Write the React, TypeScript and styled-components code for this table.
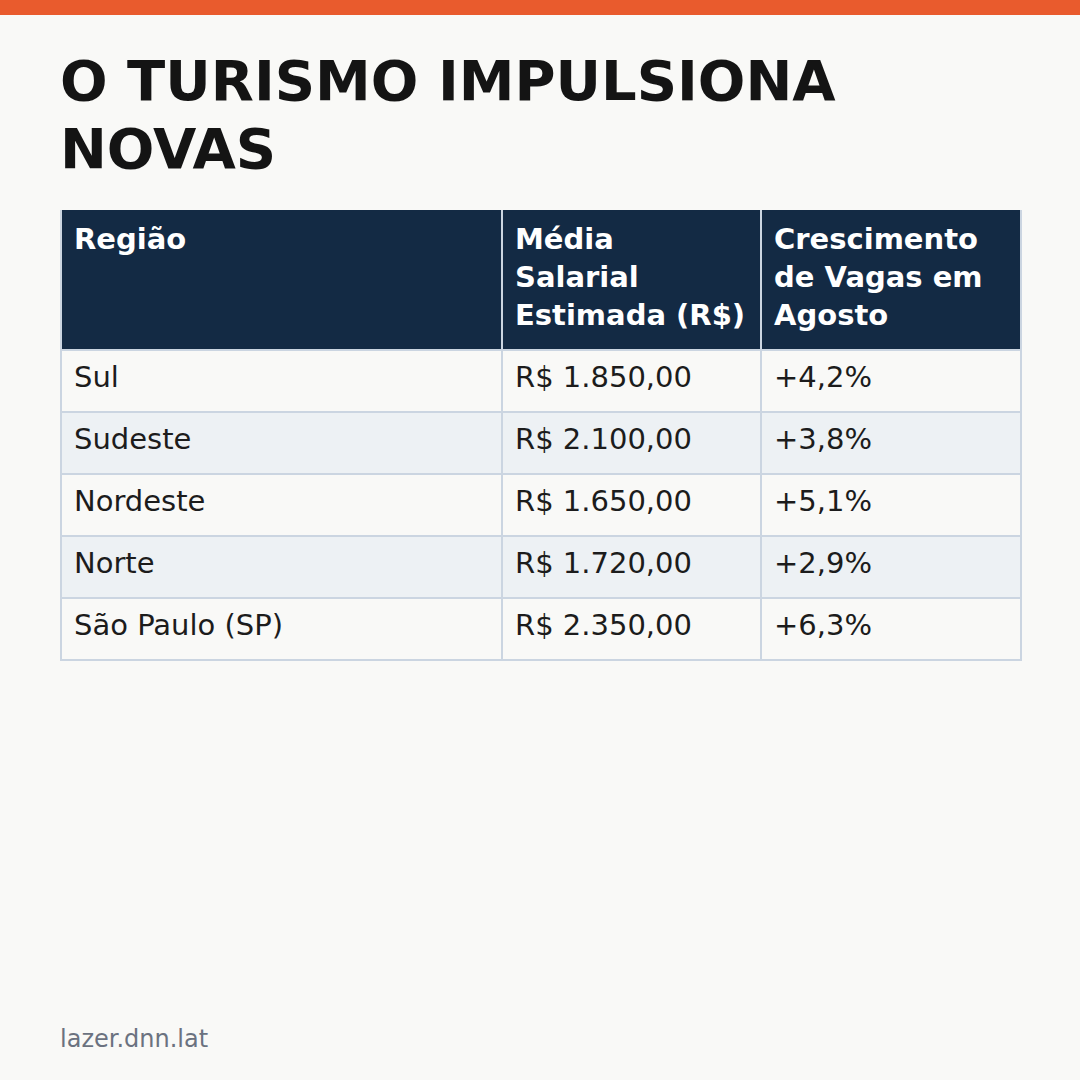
import React from "react";
import styled, { createGlobalStyle } from "styled-components";

const GlobalStyle = createGlobalStyle`
  html, body {
    margin: 0;
    padding: 0;
    background: #f9f9f7;
  }
  body {
    font-family: "DejaVu Sans", "Noto Sans", sans-serif;
  }
`;

const Page = styled.div`
  width: 1080px;
  height: 1080px;
  display: flex;
  flex-direction: column;
  background: #f9f9f7;
  box-sizing: border-box;
  overflow: hidden;
`;

const TopBar = styled.div`
  height: 15px;
  background: #e95b2d;
  flex-shrink: 0;
`;

const Content = styled.main`
  display: flex;
  flex-direction: column;
  padding: 32px 59px 0 60px;
  flex: 1;
`;

const Title = styled.h1`
  margin: 0 0 27px 0;
  font-family: "DejaVu Sans", sans-serif;
  font-weight: 700;
  font-size: 56px;
  line-height: 68px;
  color: #141414;
`;

const Table = styled.table`
  width: 960px;
  border-collapse: collapse;
  table-layout: fixed;
  font-family: "DejaVu Sans", sans-serif;
`;

const HeadCell = styled.th`
  background: #132a44;
  color: #ffffff;
  font-weight: 700;
  font-size: 29px;
  line-height: 38px;
  text-align: left;
  vertical-align: top;
  padding: 10px 12px 15px 12px;
  border: 2px solid #cbd5e1;
  border-top: none;
`;

const Row = styled.tr<{ $striped: boolean }>`
  background: ${(p) => (p.$striped ? "#edf1f4" : "#f9f9f7")};
`;

const Cell = styled.td`
  font-size: 29px;
  line-height: 38px;
  color: #1c1c1c;
  padding: 7px 12px 15px 12px;
  border: 2px solid #cbd5e1;
  vertical-align: top;
  white-space: nowrap;
`;

const Footer = styled.footer`
  margin-top: auto;
  padding: 0 60px 27px 60px;
  font-size: 24px;
  line-height: 28px;
  color: #6b7280;
  font-family: "DejaVu Sans", sans-serif;
`;

const rows = [
  ["Sul", "R$ 1.850,00", "+4,2%"],
  ["Sudeste", "R$ 2.100,00", "+3,8%"],
  ["Nordeste", "R$ 1.650,00", "+5,1%"],
  ["Norte", "R$ 1.720,00", "+2,9%"],
  ["São Paulo (SP)", "R$ 2.350,00", "+6,3%"],
];

export default function App() {
  return (
    <>
      <GlobalStyle />
      <Page>
        <TopBar />
        <Content>
          <Title>O TURISMO IMPULSIONA NOVAS</Title>
          <Table>
            <colgroup>
              <col style={{ width: 441 }} />
              <col style={{ width: 259 }} />
              <col style={{ width: 260 }} />
            </colgroup>
            <thead>
              <tr>
                <HeadCell>Região</HeadCell>
                <HeadCell>
                  Média
                  <br />
                  Salarial
                  <br />
                  Estimada (R$)
                </HeadCell>
                <HeadCell>
                  Crescimento
                  <br />
                  de Vagas em
                  <br />
                  Agosto
                </HeadCell>
              </tr>
            </thead>
            <tbody>
              {rows.map((r, i) => (
                <Row key={r[0]} $striped={i % 2 === 1}>
                  {r.map((c) => (
                    <Cell key={c}>{c}</Cell>
                  ))}
                </Row>
              ))}
            </tbody>
          </Table>
        </Content>
        <Footer>lazer.dnn.lat</Footer>
      </Page>
    </>
  );
}
